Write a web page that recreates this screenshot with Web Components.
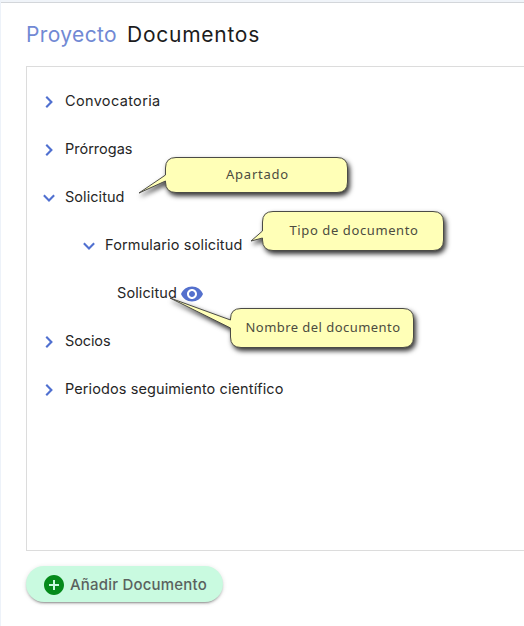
<!DOCTYPE html>
<html lang="es">
<head>
<meta charset="utf-8">
<title>Proyecto Documentos</title>
<style>
html, body { margin: 0; height: 100%; overflow: hidden; background: #fff; }
</style>
</head>
<body>
<project-page></project-page>
<script>
const define = (name, html, setup) => customElements.define(name, class extends HTMLElement {
  constructor() {
    super();
    this.attachShadow({ mode: 'open' }).innerHTML = html;
  }
  connectedCallback() { if (setup) setup(this, this.shadowRoot); }
});

// Text line whose tracking is adjusted to fill a given width.
define('fit-text', `<style>
  :host { display: inline-block; white-space: nowrap; flex: none; }
  span { display: inline-block; }
</style><span><slot></slot></span>`, (el, root) => {
  const span = root.querySelector('span');
  const width = Number(el.getAttribute('width'));
  const natural = span.getBoundingClientRect().width;
  span.style.letterSpacing = (width - natural) / el.textContent.length + 'px';
  el.style.width = width + 'px';
});

define('tree-row', `<style>
  :host { display: flex; align-items: center; height: 48px; box-sizing: border-box; padding-left: 10px; font-size: 14.5px; color: #262626; }
  :host([level="1"]) { padding-left: 50px; }
  :host([level="2"]) { padding-left: 90px; }
  svg { width: 24px; height: 24px; margin: 4px 4px 0 0; flex: none; fill: #5070d0; }
  :host([leaf]) svg { display: none; }
  :host([open]) svg { transform: rotate(90deg); }
</style>
<svg viewBox="0 0 24 24"><path d="M8.6 6.1 7.1 7.6 11.5 12l-4.4 4.4 1.5 1.5 5.9-5.9z" transform="translate(1.4 0)"/></svg><slot></slot>`);

define('eye-icon', `<style>
  :host { display: block; width: 24px; height: 24px; margin: 4px 0 0 3px; }
  svg { display: block; fill: #5470cd; }
</style>
<svg width="24" height="24" viewBox="0 0 24 24"><path d="M12 4.5C7 4.5 2.73 7.61 1 12c1.73 4.39 6 7.5 11 7.5s9.27-3.11 11-7.5c-1.73-4.39-6-7.5-11-7.5zM12 17c-2.76 0-5-2.24-5-5s2.24-5 5-5 5 2.24 5 5-2.24 5-5 5zm0-8c-1.66 0-3 1.34-3 3s1.34 3 3 3 3-1.34 3-3-1.34-3-3-3z"/></svg>`);

define('add-button', `<style>
  :host { display: flex; align-items: center; box-sizing: border-box; width: 197px; height: 36px; padding-left: 16px; border-radius: 18px;
    background: #c9fae0; color: #5a625e; font-size: 15px; font-weight: 500;
    box-shadow: 0 3px 1px -2px rgba(0,0,0,.2), 0 2px 2px rgba(0,0,0,.14), 0 1px 5px rgba(0,0,0,.12); }
  svg { flex: none; margin: 2px 4px 0 0; fill: #058a1b; }
</style>
<svg width="24" height="24" viewBox="0 0 24 24"><path d="M12 2C6.48 2 2 6.48 2 12s4.48 10 10 10 10-4.48 10-10S17.52 2 12 2zm5 11h-4v4h-2v-4H7v-2h4V7h2v4h4v2z"/></svg><slot></slot>`);

// Balloon floating over the tree; box gives the body (x y w h), tail its tip and the two heights where it joins.
define('call-out', `<style>
  :host { position: absolute; display: flex; align-items: center; justify-content: center; box-sizing: border-box; padding: 0 0 2px 2px;
    font: 400 13px "Noto Sans", "Open Sans", sans-serif; color: #4c4c40; }
  svg { position: absolute; left: 0; top: 0; overflow: visible; filter: drop-shadow(2px 3px 2.5px rgba(0,0,0,.8)); }
  path { fill: #ffffb7; stroke: #4b4b46; stroke-width: 1; stroke-linejoin: round; }
  slot { display: block; position: relative; }
</style><svg width="1" height="1"><path/></svg><slot></slot>`, (el, root) => {
  const [x, y, w, h] = el.getAttribute('box').split(' ').map(Number);
  const [tx, ty, a, b] = el.getAttribute('tail').split(' ').map(Number);
  Object.assign(el.style, { left: x + 'px', top: y + 'px', width: w + 'px', height: h + 'px' });
  const r = 11;
  root.querySelector('path').setAttribute('d',
    `M${r} .5H${w - r}Q${w - .5} .5 ${w - .5} ${r}V${h - r}Q${w - .5} ${h - .5} ${w - r} ${h - .5}H${r}Q.5 ${h - .5} .5 ${h - r}V${b}L${tx} ${ty}L.5 ${a}V${r}Q.5 .5 ${r} .5Z`);
});

define('project-page', `<style>
  :host { display: flex; flex-direction: column; position: relative; box-sizing: border-box; width: 524px; height: 626px; overflow: hidden;
    border-left: 1px solid #edf2f9; font-family: Inter, "Open Sans", sans-serif; background: #fff; }
  .bar { height: 2px; flex: none; background: #f0f4f9; border-bottom: 1px solid #d3d6da; margin-left: -1px; }
  main { display: flex; flex-direction: column; align-items: flex-start; padding-left: 25px; }
  h1 { display: flex; gap: 10px; align-items: center; box-sizing: border-box; height: 63px; padding-bottom: 1px; margin: 0; font-size: 21px; font-weight: 400; color: #1c1c1c; }
  .app { color: #7189d4; }
  .tree { box-sizing: border-box; width: 510px; height: 485px; padding-top: 9px; border: 1px solid #dcdcdc; margin-bottom: 15px; }
</style>
<div class="bar"></div>
<main>
  <h1><fit-text class="app" width="91">Proyecto</fit-text><fit-text width="133">Documentos</fit-text></h1>
  <section class="tree">
    <tree-row><fit-text width="95.5">Convocatoria</fit-text></tree-row>
    <tree-row><fit-text width="67.5">Prórrogas</fit-text></tree-row>
    <tree-row open><fit-text width="59.5">Solicitud</fit-text></tree-row>
    <tree-row level="1" open><fit-text width="137.5">Formulario solicitud</fit-text></tree-row>
    <tree-row level="2" leaf><fit-text width="60">Solicitud</fit-text><eye-icon></eye-icon></tree-row>
    <tree-row><fit-text width="45.5">Socios</fit-text></tree-row>
    <tree-row><fit-text width="218.5">Periodos seguimiento científico</fit-text></tree-row>
  </section>
  <add-button><fit-text width="137">Añadir Documento</fit-text></add-button>
</main>
<call-out box="164 157 183 36" tail="-26 36 18 24"><fit-text width="63">Apartado</fit-text></call-out>
<call-out box="261 211 182 40" tail="-11 30 20 27"><fit-text width="129">Tipo de documento</fit-text></call-out>
<call-out box="229 308 184 40" tail="-60 -10 12 20"><fit-text width="155">Nombre del documento</fit-text></call-out>`);
</script>
</body>
</html>
